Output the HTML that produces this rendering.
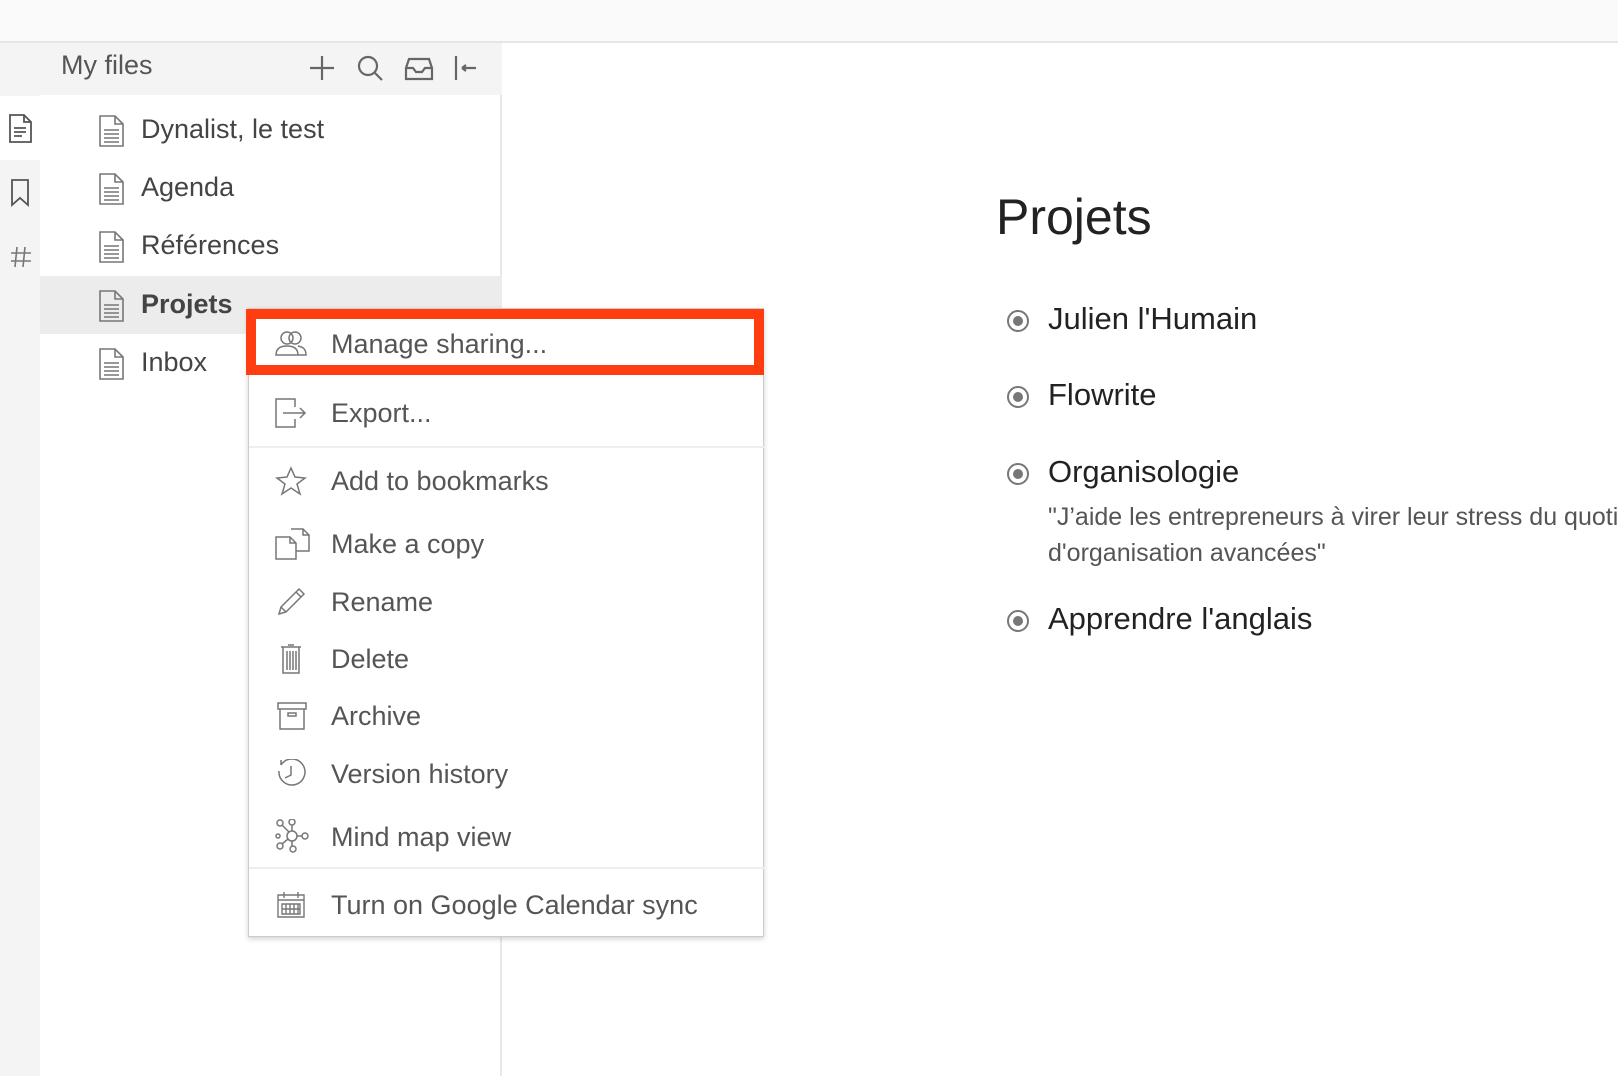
<!DOCTYPE html>
<html><head><meta charset="utf-8"><style>
*{margin:0;padding:0;box-sizing:border-box}
body{width:1618px;height:1076px;overflow:hidden;background:#fff;font-family:"Liberation Sans",sans-serif;position:relative;color:#333}
.abs{position:absolute}
#top{left:0;top:0;width:1618px;height:43px;background:#fafafa;border-bottom:2px solid #e6e6e6}
#strip{left:0;top:43px;width:40px;height:1033px;background:#f4f4f4}
#side{left:40px;top:43px;width:462px;height:1033px;background:#fff;border-right:2px solid #e8e8e8}
#hdr{left:0;top:43px;width:502px;height:52px;background:#f4f4f4}
.file{position:absolute;left:40px;width:462px;height:58px;font-size:27px;color:#444}
.file span{position:absolute;left:101px;top:13px}
.file svg{position:absolute;left:59px;top:14px}
#menu{left:248px;top:308px;width:516px;height:629px;background:#fff;border:1px solid #ccc;box-shadow:0 2px 5px rgba(0,0,0,.18)}
.mi{position:absolute;left:0;width:516px;font-size:27px;color:#555}
.mi span{position:absolute;left:82px}
.mi svg{position:absolute;left:26px}
.div{position:absolute;left:0;width:516px;height:2px;background:#eee}
.bul{position:absolute;left:1007px;width:22px;height:22px;border:2px solid #777;border-radius:50%}
.bul::after{content:"";position:absolute;left:4px;top:4px;width:10px;height:10px;border-radius:50%;background:#777}
.it{position:absolute;left:1048px;font-size:31px;color:#222}
</style></head><body>
<div id="top" class="abs"></div>
<div id="side" class="abs"></div>
<div id="strip" class="abs"></div>
<div class="abs" style="left:0;top:96px;width:40px;height:64px;background:#fff"></div>
<div id="hdr" class="abs"></div>
<div class="abs" style="left:61px;top:50px;font-size:27px;color:#555">My files</div>
<svg class="abs" style="left:305px;top:52px" width="180" height="32" fill="none" stroke="#666" stroke-width="2.2">
<path d="M17 4v24M5 16h24"/>
<circle cx="63" cy="14" r="9"/><path d="M70 21l7 7"/>
<path d="M101 16l3-9h20l3 9v11h-26zM101 16h7l3 4h6l3-4h7"/>
<path d="M151 4v24M157 16h14M157 16l4-3M157 16l4 3"/>
</svg>
<svg class="abs" style="left:9px;top:114px" width="24" height="30" fill="none" stroke="#555" stroke-width="1.8"><path d="M1 1h14l7 7v20H1zM15 1v7h7M5 14h12M5 18h12M5 22h8"/></svg>
<svg class="abs" style="left:10px;top:178px" width="20" height="30" fill="none" stroke="#555" stroke-width="1.8"><path d="M2 2h16v25l-8-7-8 7z"/></svg>
<svg class="abs" style="left:10px;top:246px" width="22" height="22" fill="none" stroke="#777" stroke-width="1.6"><path d="M7 1L5 21M15 1l-2 20M1 7h20M1 15h20"/></svg>

<div class="file" style="top:101px"><svg width="26" height="32" fill="none" stroke="#777" stroke-width="1.6"><path d="M1 1h15l8 8v22H1zM16 1v8h8M5 15h15M5 19h15M5 23h15M5 27h15"/></svg><span>Dynalist, le test</span></div>
<div class="file" style="top:159px"><svg width="26" height="32" fill="none" stroke="#777" stroke-width="1.6"><path d="M1 1h15l8 8v22H1zM16 1v8h8M5 15h15M5 19h15M5 23h15M5 27h15"/></svg><span>Agenda</span></div>
<div class="file" style="top:217px"><svg width="26" height="32" fill="none" stroke="#777" stroke-width="1.6"><path d="M1 1h15l8 8v22H1zM16 1v8h8M5 15h15M5 19h15M5 23h15M5 27h15"/></svg><span>Références</span></div>
<div class="file" style="top:276px;background:#ececec;font-weight:bold"><svg width="26" height="32" fill="none" stroke="#777" stroke-width="1.6"><path d="M1 1h15l8 8v22H1zM16 1v8h8M5 15h15M5 19h15M5 23h15M5 27h15"/></svg><span>Projets</span></div>
<div class="file" style="top:334px"><svg width="26" height="32" fill="none" stroke="#777" stroke-width="1.6"><path d="M1 1h15l8 8v22H1zM16 1v8h8M5 15h15M5 19h15M5 23h15M5 27h15"/></svg><span>Inbox</span></div>

<div id="menu" class="abs">
<div class="mi" style="top:20px"><svg width="32" height="28" fill="none" stroke="#777" stroke-width="1.5"><circle cx="12" cy="9" r="6"/><circle cx="20" cy="9" r="6"/><path d="M1 26c0-7 5-9 11-9s11 2 11 9zM23 17c5 1 8 3 8 9h-8"/></svg><span style="top:0px">Manage sharing...</span></div>
<div class="mi" style="top:89px"><svg width="32" height="30" fill="none" stroke="#777" stroke-width="1.5"><path d="M20 9V1H1v28h19v-8M8 15h22M25 10l5 5-5 5"/></svg><span style="top:0px">Export...</span></div>
<div class="div" style="top:137px"></div>
<div class="mi" style="top:157px"><svg width="32" height="30" fill="none" stroke="#777" stroke-width="1.5"><path d="M16 2l4 9 10 1-8 6 3 10-9-6-9 6 3-10-8-6 10-1z"/></svg><span style="top:0px">Add to bookmarks</span></div>
<div class="mi" style="top:218px"><svg width="36" height="34" fill="none" stroke="#777" stroke-width="1.5"><path d="M1 10h14l6 6v16H1zM15 10v6h6M16 2h12l6 6v16H21M28 2v6h6"/></svg><span style="top:2px">Make a copy</span></div>
<div class="mi" style="top:277px"><svg width="32" height="32" fill="none" stroke="#777" stroke-width="1.5"><path d="M4 28l2-7L24 3l5 5-18 18zM6 21l5 5M21 6l5 5"/></svg><span style="top:1px">Rename</span></div>
<div class="mi" style="top:334px"><svg width="32" height="32" fill="none" stroke="#777" stroke-width="1.5"><path d="M8 4h16v26H8zM6 4h20M13 2h6M12 8v19M15 8v19M18 8v19M21 8v19"/></svg><span style="top:1px">Delete</span></div>
<div class="mi" style="top:392px"><svg width="32" height="30" fill="none" stroke="#777" stroke-width="1.5"><path d="M3 2h28v6H3zM5 8v20h24V8M13 12h8v3h-8z"/></svg><span style="top:0px">Archive</span></div>
<div class="mi" style="top:450px"><svg width="32" height="30" fill="none" stroke="#777" stroke-width="1.5"><path d="M6 6A13 13 0 1 1 4 12M6 6V1M16 7v9l-6 3"/></svg><span style="top:0px">Version history</span></div>
<div class="mi" style="top:510px"><svg width="34" height="34" fill="none" stroke="#777" stroke-width="1.5"><circle cx="17" cy="17" r="5"/><circle cx="5" cy="4" r="3"/><circle cx="17" cy="3" r="3"/><circle cx="30" cy="17" r="3"/><circle cx="5" cy="27" r="3"/><circle cx="18" cy="30" r="3"/><circle cx="3" cy="17" r="2"/><path d="M7 6l7 7M17 6v6M22 17h5M13 20l-6 5M17 22v5"/></svg><span style="top:3px">Mind map view</span></div>
<div class="div" style="top:558px"></div>
<div class="mi" style="top:580px"><svg width="32" height="32" fill="none" stroke="#777" stroke-width="1.4"><path d="M3 6h26v22H3zM3 11h26M9 3v6M23 3v6M7 15h18v10H7zM7 20h18M11 15v10M15 15v10M19 15v10M23 15v10"/></svg><span style="top:1px">Turn on Google Calendar sync</span></div>
</div>
<div class="abs" style="left:246px;top:309px;width:518px;height:66px;border:10px solid #ff3d10"></div>

<div class="abs" style="left:996px;top:188px;font-size:50px;color:#222">Projets</div>
<div class="bul" style="top:310px"></div><div class="it" style="top:301px">Julien l'Humain</div>
<div class="bul" style="top:386px"></div><div class="it" style="top:377px">Flowrite</div>
<div class="bul" style="top:463px"></div><div class="it" style="top:454px">Organisologie</div>
<div class="abs" style="left:1048px;top:499px;font-size:25px;color:#555;line-height:36px;white-space:nowrap">"J’aide les entrepreneurs à virer leur stress du quotidien<br>d'organisation avancées"</div>
<div class="bul" style="top:610px"></div><div class="it" style="top:601px">Apprendre l'anglais</div>
</body></html>
